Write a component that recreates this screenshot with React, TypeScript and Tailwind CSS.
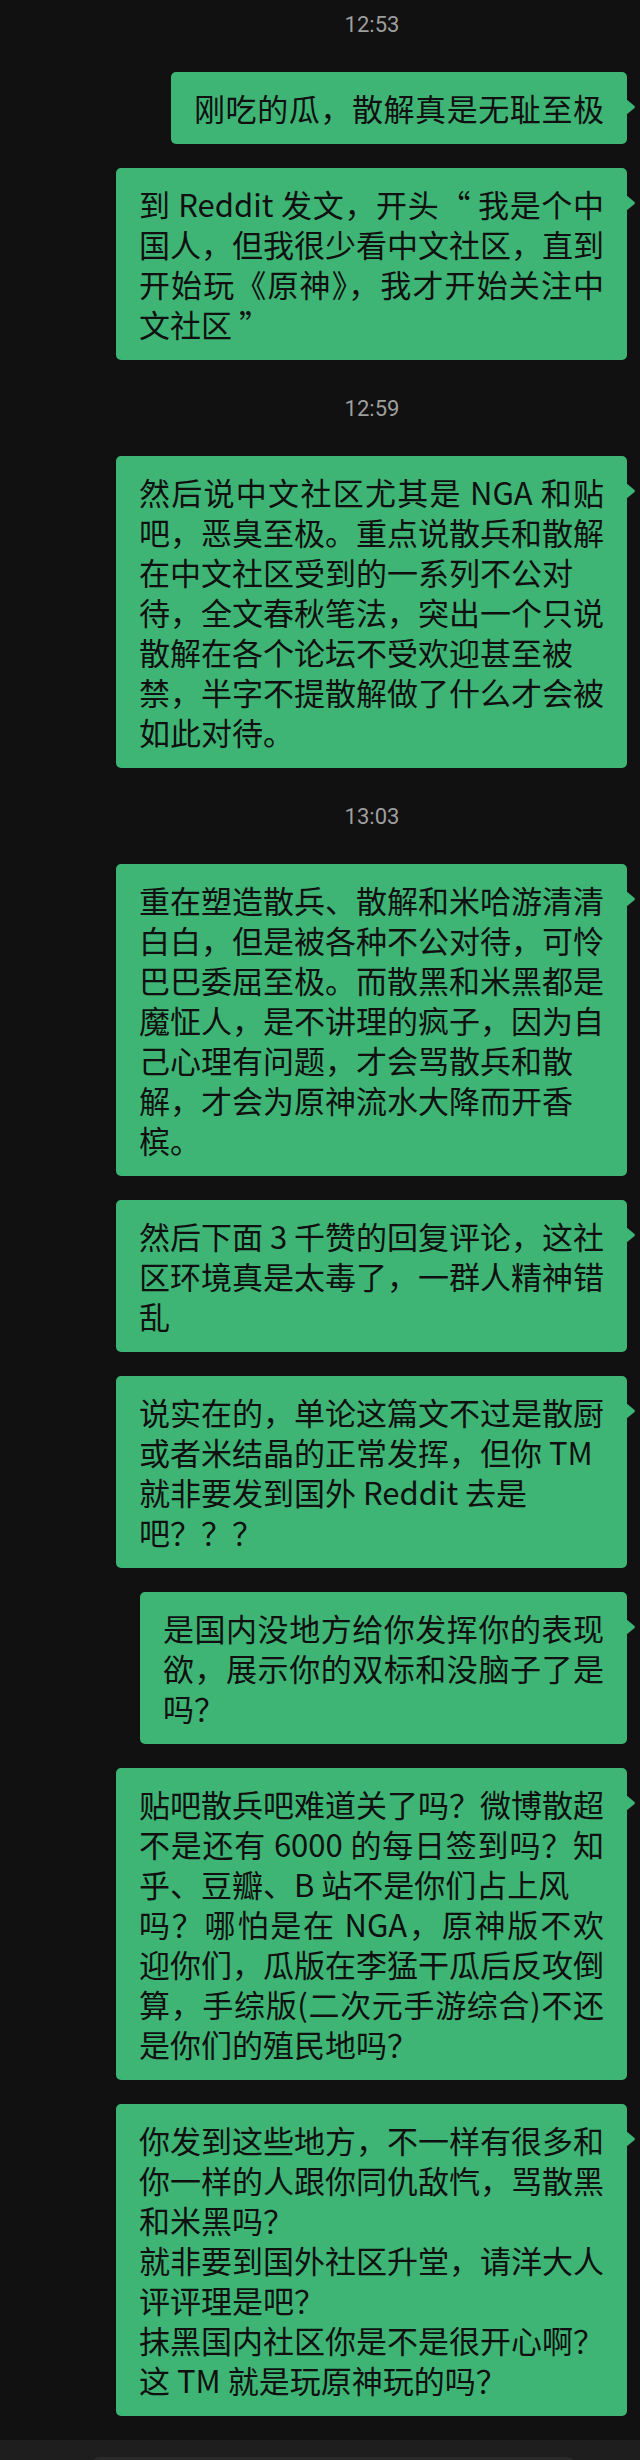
import React from "react";

type Line = { t: string; j?: boolean };
type Item =
  | { kind: "time"; t: string }
  | { kind: "msg"; w: number; lines: Line[] };

const J = (t: string): Line => ({ t, j: true });
const N = (t: string): Line => ({ t });

const items: Item[] = [
  { kind: "time", t: "12:53" },
  { kind: "msg", w: 456, lines: [J("刚吃的瓜，散解真是无耻至极")] },
  {
    kind: "msg",
    w: 511,
    lines: [
      J("到 Reddit 发文，开头“ 我是个中"),
      J("国人，但我很少看中文社区，直到"),
      J("开始玩《原神》，我才开始关注中"),
      N("文社区 ”"),
    ],
  },
  { kind: "time", t: "12:59" },
  {
    kind: "msg",
    w: 511,
    lines: [
      J("然后说中文社区尤其是 NGA 和贴"),
      J("吧，恶臭至极。重点说散兵和散解"),
      N("在中文社区受到的一系列不公对"),
      J("待，全文春秋笔法，突出一个只说"),
      N("散解在各个论坛不受欢迎甚至被"),
      J("禁，半字不提散解做了什么才会被"),
      N("如此对待。"),
    ],
  },
  { kind: "time", t: "13:03" },
  {
    kind: "msg",
    w: 511,
    lines: [
      J("重在塑造散兵、散解和米哈游清清"),
      J("白白，但是被各种不公对待，可怜"),
      J("巴巴委屈至极。而散黑和米黑都是"),
      J("魔怔人，是不讲理的疯子，因为自"),
      N("己心理有问题，才会骂散兵和散"),
      N("解，才会为原神流水大降而开香"),
      N("槟。"),
    ],
  },
  {
    kind: "msg",
    w: 511,
    lines: [
      J("然后下面 3 千赞的回复评论，这社"),
      J("区环境真是太毒了，一群人精神错"),
      N("乱"),
    ],
  },
  {
    kind: "msg",
    w: 511,
    lines: [
      J("说实在的，单论这篇文不过是散厨"),
      N("或者米结晶的正常发挥，但你 TM"),
      N("就非要发到国外 Reddit 去是"),
      N("吧？？？"),
    ],
  },
  {
    kind: "msg",
    w: 487,
    lines: [
      J("是国内没地方给你发挥你的表现"),
      J("欲，展示你的双标和没脑子了是"),
      N("吗？"),
    ],
  },
  {
    kind: "msg",
    w: 511,
    lines: [
      J("贴吧散兵吧难道关了吗？微博散超"),
      J("不是还有 6000 的每日签到吗？知"),
      N("乎、豆瓣、B 站不是你们占上风"),
      J("吗？哪怕是在 NGA，原神版不欢"),
      J("迎你们，瓜版在李猛干瓜后反攻倒"),
      J("算，手综版(二次元手游综合)不还"),
      N("是你们的殖民地吗？"),
    ],
  },
  {
    kind: "msg",
    w: 511,
    lines: [
      J("你发到这些地方，不一样有很多和"),
      J("你一样的人跟你同仇敌忾，骂散黑"),
      N("和米黑吗？"),
      J("就非要到国外社区升堂，请洋大人"),
      N("评评理是吧？"),
      J("抹黑国内社区你是不是很开心啊？"),
      N("这 TM 就是玩原神玩的吗？"),
    ],
  },
];

function Bubble({ w, lines }: { w: number; lines: Line[] }) {
  return (
    <div className="flex justify-end">
      <div
        className="relative rounded-[5px] bg-[#3eb575] px-[23px] py-[16px] text-[31px] leading-[40px] text-[#101010]"
        style={{ width: w }}
      >
        {lines.map((l, i) => (
          <div
            key={i}
            className={
              l.j
                ? "whitespace-nowrap text-justify [text-align-last:justify]"
                : "whitespace-nowrap text-left"
            }
          >
            {l.t}
          </div>
        ))}
        <svg
          className="absolute right-[-9px] top-[27px]"
          width="10"
          height="16"
          viewBox="0 0 10 16"
        >
          <path d="M0 0 L8.5 7 Q9.6 8 8.5 9 L0 16 Z" fill="#3eb575" />
        </svg>
      </div>
    </div>
  );
}

export default function App() {
  return (
    <div
      lang="zh-CN"
      className="flex min-h-[2460px] flex-col bg-[#111111]"
      style={{ fontFamily: '"Noto Sans CJK SC", "Noto Sans", sans-serif' }}
    >
      <div className="flex flex-col gap-6 pr-[13px]">
        {items.map((it, i) =>
          it.kind === "time" ? (
            <div
              key={i}
              className="flex h-12 items-center justify-center pl-[117px] text-[22px] text-[#9e9e9e]"
              style={{ fontFamily: "Roboto, sans-serif" }}
            >
              {it.t}
            </div>
          ) : (
            <Bubble key={i} w={it.w} lines={it.lines} />
          )
        )}
      </div>
      <div className="mt-6 flex flex-1 justify-center bg-[#1e1e1e] pt-[17px] pr-[1px]">
        <div className="h-[40px] w-[483px] rounded-t-[8px] bg-[#2a2a2a] ml-[27px]" />
      </div>
    </div>
  );
}
